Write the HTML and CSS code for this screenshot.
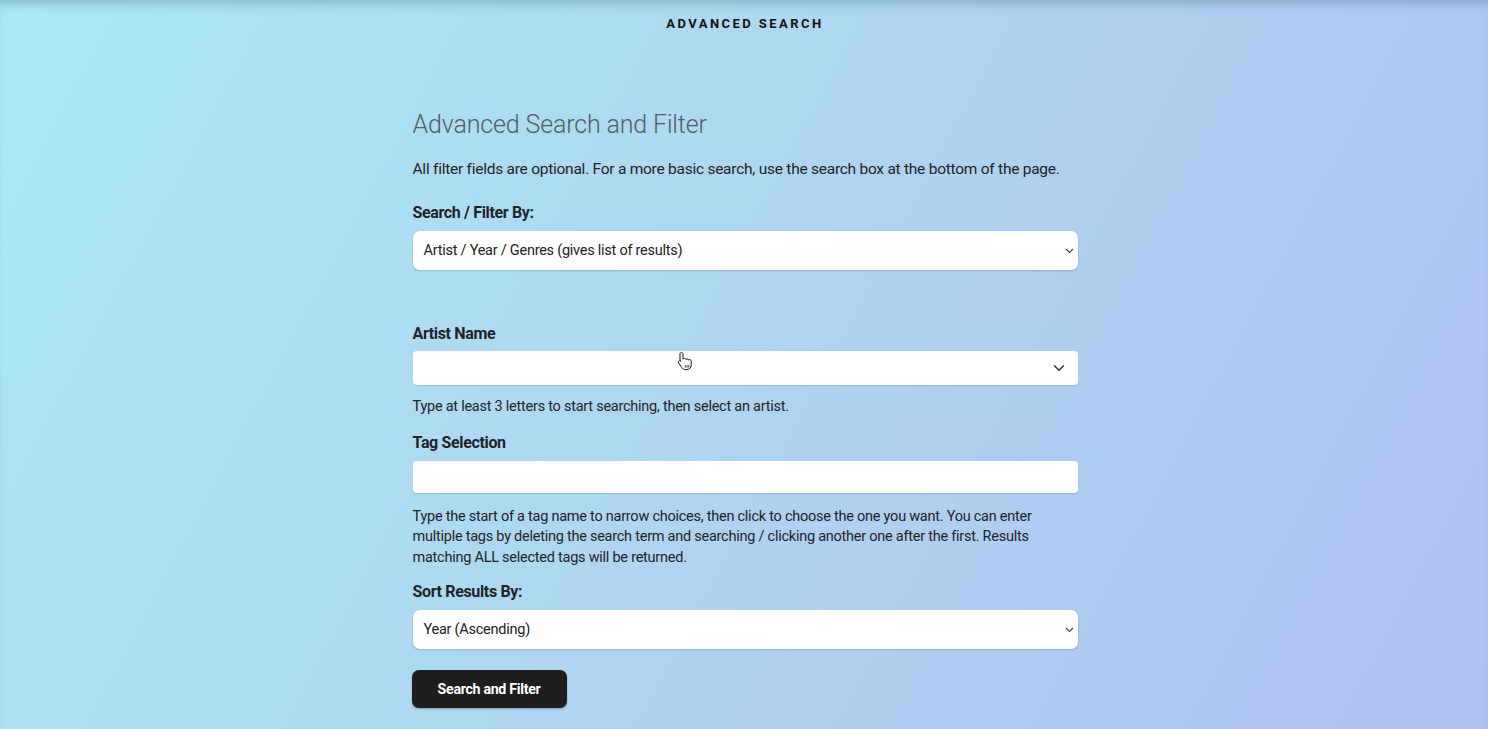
FILE: index.html
```html
<!DOCTYPE html>
<html lang="en">
<head>
<meta charset="utf-8">
<title>Advanced Search</title>
<link rel="stylesheet" href="styles.css">
</head>
<body>
<div class="page">
  <header class="site-header">
    <div class="site-title">ADVANCED SEARCH</div>
  </header>
  <main class="content">
    <h1 class="title">Advanced Search and Filter</h1>
    <p class="intro">All filter fields are optional. For a more basic search, use the search box at the bottom of the page.</p>
    <form class="form">
      <div class="field">
        <label class="label">Search / Filter By:</label>
        <div class="select">
          <span class="select-text">Artist / Year / Genres (gives list of results)</span>
          <svg class="chev-sm" width="9" height="6" viewBox="0 0 9 6"><path d="M1 1l3.5 3.5L8 1" fill="none" stroke="#444" stroke-width="1.1"/></svg>
        </div>
      </div>
      <div class="field field-artist">
        <label class="label">Artist Name</label>
        <div class="select2">
          <svg class="chev-lg" width="12" height="8" viewBox="0 0 12 8"><path d="M1.2 1.5L6 6.2l4.8-4.7" fill="none" stroke="#333" stroke-width="1.5"/></svg>
          <svg class="cursor" width="18" height="20" viewBox="0 0 18 20">
            <path d="M5.5 1.5c.9 0 1.5.6 1.5 1.5v5.2c.3-.5.8-.8 1.4-.8.8 0 1.3.5 1.4 1.1.3-.4.8-.6 1.3-.6.8 0 1.3.5 1.4 1.2.3-.3.7-.5 1.2-.5 1 0 1.5.7 1.5 1.6v3.9c0 2.6-1.8 4.5-4.4 4.5H9.4c-1.6 0-2.7-.7-3.6-2L2.6 12c-.5-.8-.3-1.6.3-2 .6-.4 1.4-.3 1.9.3L4 9.6V3c0-.9.6-1.5 1.5-1.5z" fill="#fff" stroke="#111" stroke-width="1"/>
            <path d="M9.2 14v2.6M11 14v2.6M12.8 14v2.6" stroke="#111" stroke-width=".8"/>
          </svg>
        </div>
        <p class="help help-artist">Type at least 3 letters to start searching, then select an artist.</p>
      </div>
      <div class="field field-tag">
        <label class="label">Tag Selection</label>
        <div class="input"></div>
        <p class="help help-tag">Type the start of a tag name to narrow choices, then click to choose the one you want. You can enter multiple tags by deleting the search term and searching / clicking another one after the first. Results matching ALL selected tags will be returned.</p>
      </div>
      <div class="field field-sort">
        <label class="label">Sort Results By:</label>
        <div class="select">
          <span class="select-text">Year (Ascending)</span>
          <svg class="chev-sm" width="9" height="6" viewBox="0 0 9 6"><path d="M1 1l3.5 3.5L8 1" fill="none" stroke="#444" stroke-width="1.1"/></svg>
        </div>
      </div>
      <div class="actions">
        <button type="button" class="btn">Search and Filter</button>
      </div>
    </form>
  </main>
</div>
</body>
</html>
```
FILE: styles.css
```css
* { box-sizing: border-box; }
html, body { margin: 0; padding: 0; height: 100%; }
body {
  font-family: Roboto, "Liberation Sans", sans-serif;
  color: #1e2328;
  background: linear-gradient(118deg, #abe9f4 0%, #aed5f1 50%, #aec1ef 100%);
  overflow: hidden;
}
.page {
  min-height: 729px;
  box-shadow: inset 0 10px 10px -6px rgba(90, 130, 160, 0.45);
}
.site-header {
  display: flex;
  justify-content: center;
  padding-top: 17px;
}
.site-title {
  font-weight: 700;
  font-size: 13px;
  letter-spacing: 2.45px;
  color: #111;
  line-height: 14px;
  margin-left: 2px;
}
.content {
  width: 665px;
  margin: 0 auto;
  padding-top: 79px;
  transform: translateX(1px);
}
.title {
  font-weight: 300;
  font-size: 25px;
  line-height: 30px;
  color: #545c64;
  margin: 0;
  letter-spacing: -0.15px;
}
.intro {
  font-size: 15.5px;
  line-height: 20px;
  margin: 19px 0 0;
  letter-spacing: -0.25px;
}
.form { display: flex; flex-direction: column; margin-top: 24px; }
.field { display: flex; flex-direction: column; }
.label {
  font-weight: 700;
  font-size: 16px;
  line-height: 20px;
  letter-spacing: -0.35px;
  color: #1e2328;
  margin-bottom: 8px;
}
.select {
  height: 39px;
  background: #fff;
  border-radius: 7px;
  box-shadow: 0 1px 2px rgba(60, 90, 120, 0.25);
  display: flex;
  align-items: center;
  justify-content: space-between;
  padding: 0 4px 0 11px;
}
.select-text {
  font-size: 14.5px;
  letter-spacing: -0.25px;
  color: #222;
}
.chev-sm { display: block; }
.field-artist { margin-top: 54px; }
.select2 {
  position: relative;
  height: 34px;
  margin-top: -1px;
  background: #fff;
  border-radius: 4px;
  box-shadow: 0 1px 1px rgba(60, 90, 120, 0.2);
  display: flex;
  align-items: center;
  justify-content: flex-end;
  padding-right: 13px;
}
.chev-lg { display: block; }
.cursor {
  position: absolute;
  left: 263px;
  top: 0px;
}
.help {
  font-size: 14.5px;
  line-height: 20.5px;
  letter-spacing: -0.25px;
  margin: 12px 0 0;
  color: #1e2328;
}
.help-tag { margin-top: 14px; }
.field-tag { margin-top: 15px; }
.field-sort { margin-top: 14px; }
.input {
  height: 32px;
  background: #fff;
  border-radius: 4px;
  box-shadow: 0 1px 1px rgba(60, 90, 120, 0.2);
}
.actions { margin-top: 21px; display: flex; }
.btn {
  font-family: Roboto, "Liberation Sans", sans-serif;
  width: 155px;
  height: 38px;
  border: none;
  border-radius: 7px;
  background: #1e1e1e;
  color: #fff;
  font-weight: 700;
  font-size: 14.2px;
  letter-spacing: -0.3px;
  box-shadow: 0 1px 2px rgba(0,0,0,0.3);
  margin-left: -1px;
}
```
